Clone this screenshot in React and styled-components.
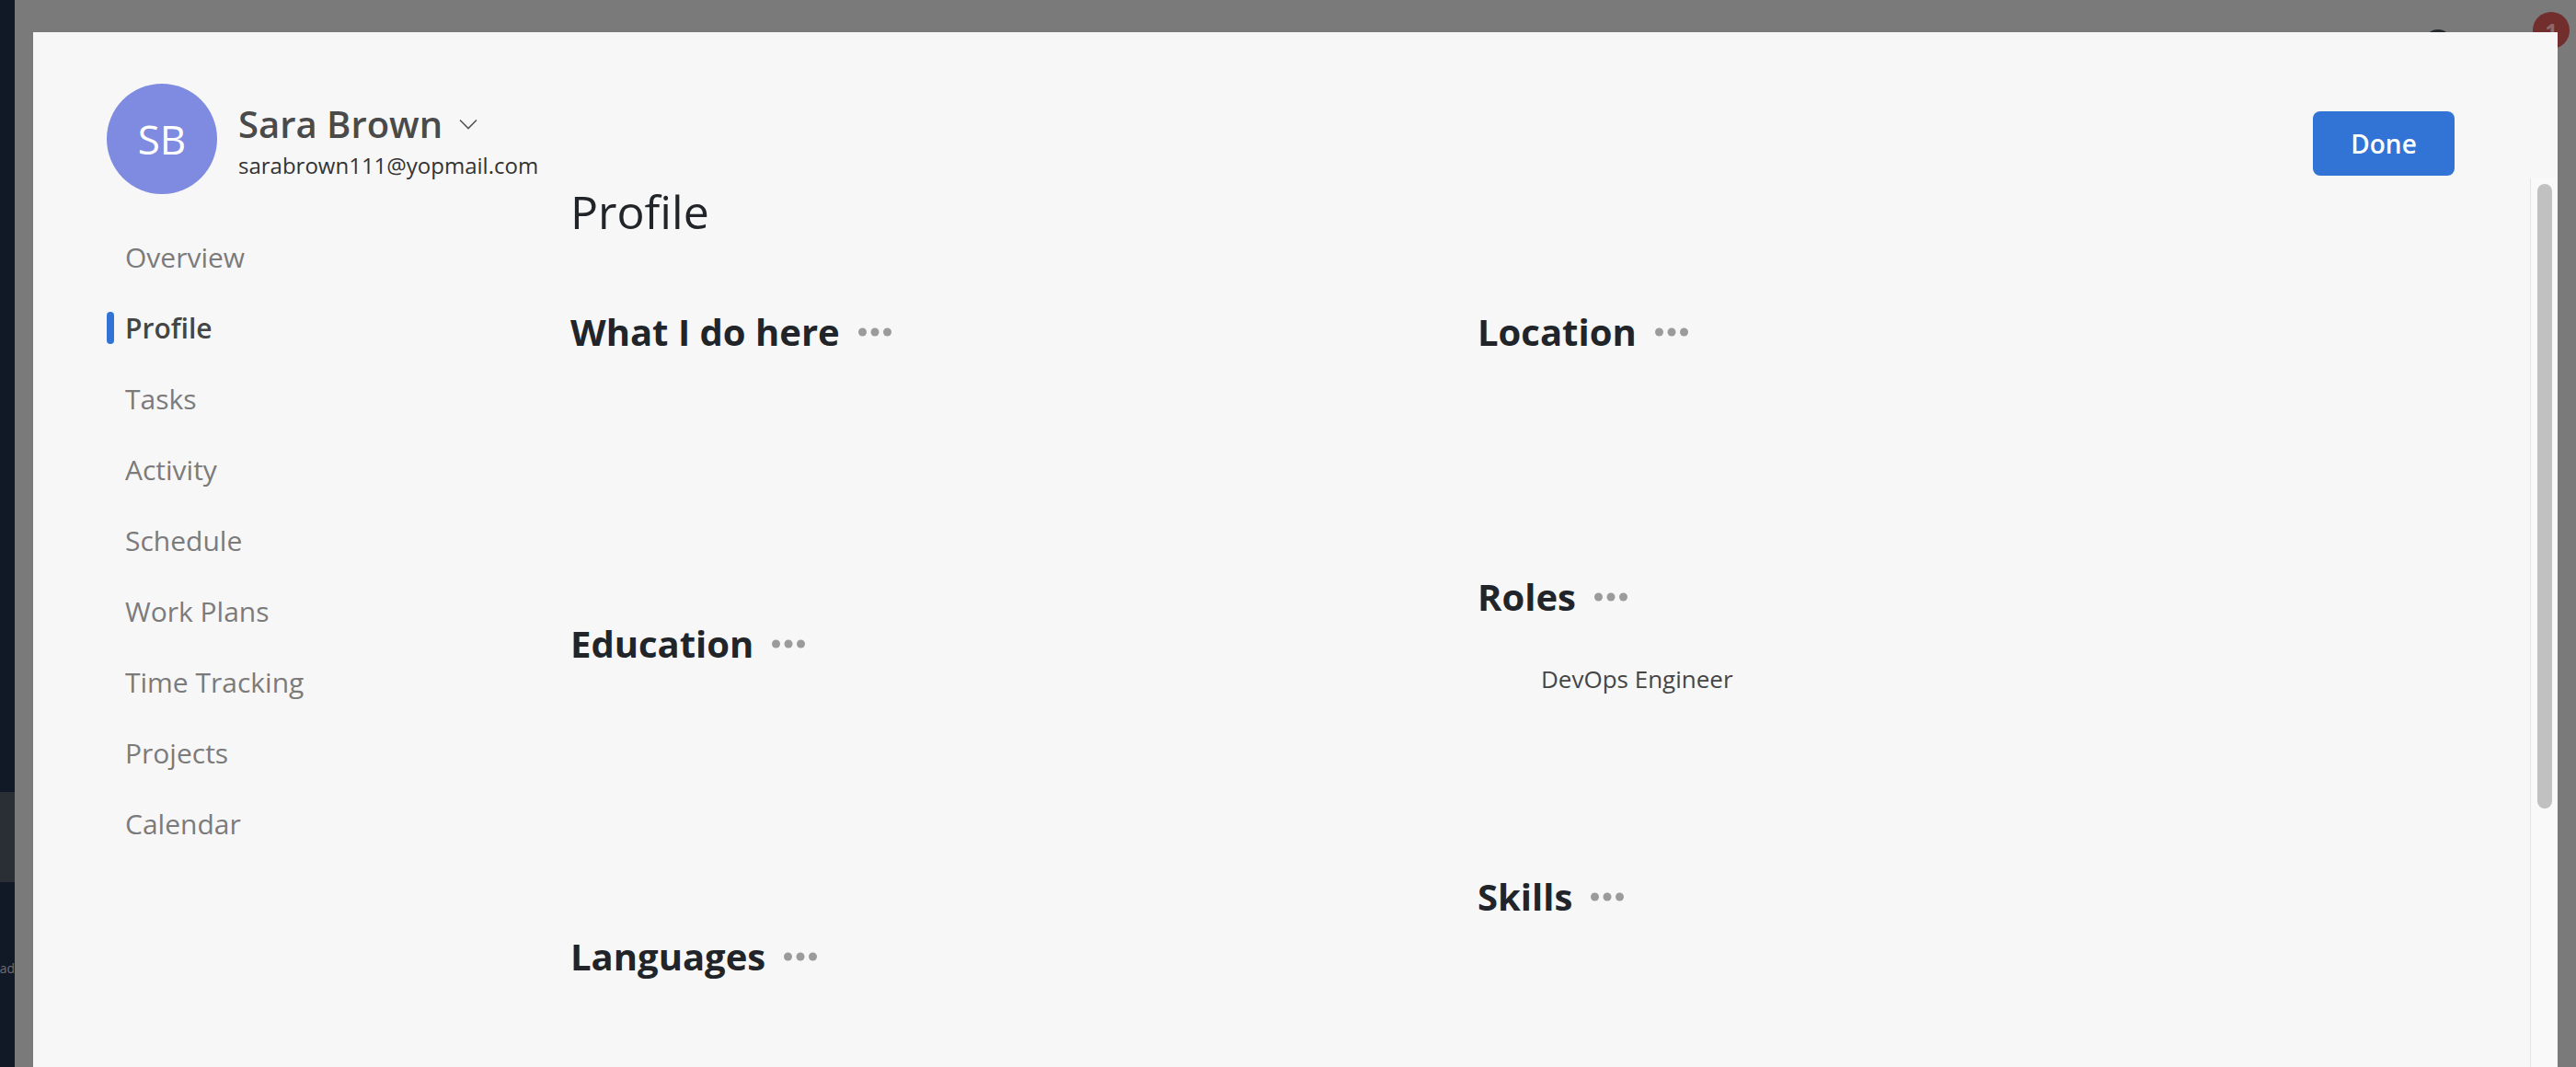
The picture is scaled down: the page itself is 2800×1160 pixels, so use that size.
import React from "react";
import styled, { createGlobalStyle } from "styled-components";

const Global = createGlobalStyle`
  html, body {
    margin: 0;
    padding: 0;
    width: 2800px;
    height: 1160px;
    overflow: hidden;
    font-family: "Open Sans", "Noto Sans", "Liberation Sans", sans-serif;
  }
  * { box-sizing: border-box; }
`;

const Page = styled.div`
  position: relative;
  width: 2800px;
  height: 1160px;
  display: flex;
  background: #7a7a7a;
  overflow: hidden;
`;

const SideStrip = styled.div`
  width: 16px;
  flex: none;
  background: #111826;
  display: flex;
  flex-direction: column;
  overflow: hidden;
`;

const StripBlock = styled.div`
  margin-top: 861px;
  height: 98px;
  background: #2a2e35;
`;

const StripLabel = styled.div`
  margin-top: 84px;
  display: flex;
  justify-content: flex-end;
  font-size: 14px;
  color: #6b6f76;
  white-space: nowrap;
`;

const Main = styled.div`
  flex: 1;
  display: flex;
  flex-direction: column;
`;

const AppHeader = styled.div`
  display: flex;
  justify-content: flex-end;
  align-items: flex-start;
  gap: 88px;
  padding: 13px 7px 0 0;
`;

const UserDot = styled.div`
  width: 30px;
  height: 30px;
  margin-top: 19px;
  border-radius: 50%;
  background: #262a31;
`;

const Badge = styled.div`
  width: 40px;
  height: 40px;
  border-radius: 50%;
  background: #722d2d;
  color: #8c6a6a;
  font-size: 24px;
  font-weight: 700;
  display: flex;
  align-items: center;
  justify-content: center;
`;

const Modal = styled.div`
  position: absolute;
  left: 36px;
  top: 35px;
  width: 2744px;
  height: 1200px;
  background: #f7f7f7;
  display: flex;
  flex-direction: column;
`;

const Header = styled.div`
  height: 159px;
  flex: none;
  padding: 56px 112px 0 80px;
  display: flex;
  justify-content: space-between;
  align-items: flex-start;
  position: relative;
  z-index: 1;
`;

const Identity = styled.div`
  display: flex;
  align-items: center;
  gap: 23px;
`;

const Avatar = styled.div`
  width: 120px;
  height: 120px;
  border-radius: 50%;
  background: #7e8be0;
  color: #ffffff;
  font-size: 44px;
  display: flex;
  align-items: center;
  justify-content: center;
`;

const NameBlock = styled.div`
  display: flex;
  flex-direction: column;
  gap: 5px;
  margin-top: 5px;
`;

const NameRow = styled.div`
  display: flex;
  align-items: center;
  gap: 18px;
`;

const Name = styled.span`
  font-size: 40px;
  line-height: 48px;
  font-weight: 600;
  color: #4a4a4a;
`;

const Email = styled.span`
  font-size: 24px;
  line-height: 32px;
  color: #333333;
`;

const DoneButton = styled.button`
  margin-top: 30px;
  width: 154px;
  height: 70px;
  border: none;
  border-radius: 8px;
  background: #3274d5;
  color: #ffffff;
  font-family: inherit;
  font-size: 28px;
  font-weight: 600;
`;

const Body = styled.div`
  flex: 1;
  display: flex;
  min-height: 0;
`;

const Nav = styled.nav`
  width: 584px;
  flex: none;
  padding: 65px 0 0 80px;
  display: flex;
  flex-direction: column;
  gap: 36px;
`;

const NavItem = styled.div`
  display: flex;
  align-items: center;
  gap: 12px;
  font-size: 30px;
  line-height: 41px;
  color: ${(p) => (p.$active ? "#454545" : "#7b7b7b")};
  font-weight: ${(p) => (p.$active ? 600 : 400)};
`;

const Marker = styled.span`
  width: 8px;
  height: 35px;
  border-radius: 4px;
  background: ${(p) => (p.$active ? "#3274d5" : "transparent")};
`;

const Content = styled.div`
  flex: 1;
  display: flex;
  min-width: 0;
`;

const Scroller = styled.div`
  flex: 1;
  padding-top: 7px;
`;

const Title = styled.h1`
  margin: 0;
  font-size: 50px;
  line-height: 58px;
  font-weight: 400;
  color: #212529;
`;

const Columns = styled.div`
  margin-top: 78px;
  display: grid;
  grid-template-columns: 986px 1fr;
`;

const Column = styled.div`
  display: flex;
  flex-direction: column;
`;

const Section = styled.section`
  min-height: ${(p) => p.$h}px;
  display: flex;
  flex-direction: column;
`;

const SectionHead = styled.div`
  display: flex;
  align-items: center;
  gap: 20px;
`;

const SectionTitle = styled.h3`
  margin: 0;
  font-size: 40px;
  line-height: 48px;
  font-weight: 700;
  color: #212529;
`;

const RoleItem = styled.div`
  margin-top: 47px;
  padding-left: 69px;
  font-size: 26px;
  line-height: 36px;
  color: #454545;
`;

const Track = styled.div`
  width: 28px;
  flex: none;
  margin-right: 2px;
  border-left: 1px solid #e4e4e4;
  background: #f9f9f9;
  padding: 6px 4px 0 7px;
`;

const Thumb = styled.div`
  width: 16px;
  height: 679px;
  border-radius: 8px;
  background: #c1c1c1;
`;

const Dots = () => (
  <svg width="36" height="10" viewBox="0 0 36 10" aria-hidden="true">
    <circle cx="4.5" cy="5" r="4.5" fill="#9b9b9b" />
    <circle cx="18" cy="5" r="4.5" fill="#9b9b9b" />
    <circle cx="31.5" cy="5" r="4.5" fill="#9b9b9b" />
  </svg>
);

const Chevron = () => (
  <svg width="20" height="12" viewBox="0 0 20 12" aria-hidden="true">
    <path d="M1 1.5 L10 10.5 L19 1.5" fill="none" stroke="#555" strokeWidth="1.6" />
  </svg>
);

const navItems = [
  "Overview",
  "Profile",
  "Tasks",
  "Activity",
  "Schedule",
  "Work Plans",
  "Time Tracking",
  "Projects",
  "Calendar",
];

const SectionBlock = ({ title, h, children }) => (
  <Section $h={h}>
    <SectionHead>
      <SectionTitle>{title}</SectionTitle>
      <Dots />
    </SectionHead>
    {children}
  </Section>
);

export default function App() {
  return (
    <>
      <Global />
      <Page>
        <SideStrip>
          <StripBlock />
          <StripLabel>Unread</StripLabel>
        </SideStrip>
        <Main>
          <AppHeader>
            <UserDot />
            <Badge>1</Badge>
          </AppHeader>
        </Main>
        <Modal>
          <Header>
            <Identity>
              <Avatar>SB</Avatar>
              <NameBlock>
                <NameRow>
                  <Name>Sara Brown</Name>
                  <Chevron />
                </NameRow>
                <Email>sarabrown111@yopmail.com</Email>
              </NameBlock>
            </Identity>
            <DoneButton>Done</DoneButton>
          </Header>
          <Body>
            <Nav>
              {navItems.map((item) => (
                <NavItem key={item} $active={item === "Profile"}>
                  <Marker $active={item === "Profile"} />
                  {item}
                </NavItem>
              ))}
            </Nav>
            <Content>
              <Scroller>
                <Title>Profile</Title>
                <Columns>
                  <Column>
                    <SectionBlock title="What I do here" h={339} />
                    <SectionBlock title="Education" h={340} />
                    <SectionBlock title="Languages" h={200} />
                  </Column>
                  <Column>
                    <SectionBlock title="Location" h={288} />
                    <SectionBlock title="Roles" h={326}>
                      <RoleItem>DevOps Engineer</RoleItem>
                    </SectionBlock>
                    <SectionBlock title="Skills" h={200} />
                  </Column>
                </Columns>
              </Scroller>
              <Track>
                <Thumb />
              </Track>
            </Content>
          </Body>
        </Modal>
      </Page>
    </>
  );
}
